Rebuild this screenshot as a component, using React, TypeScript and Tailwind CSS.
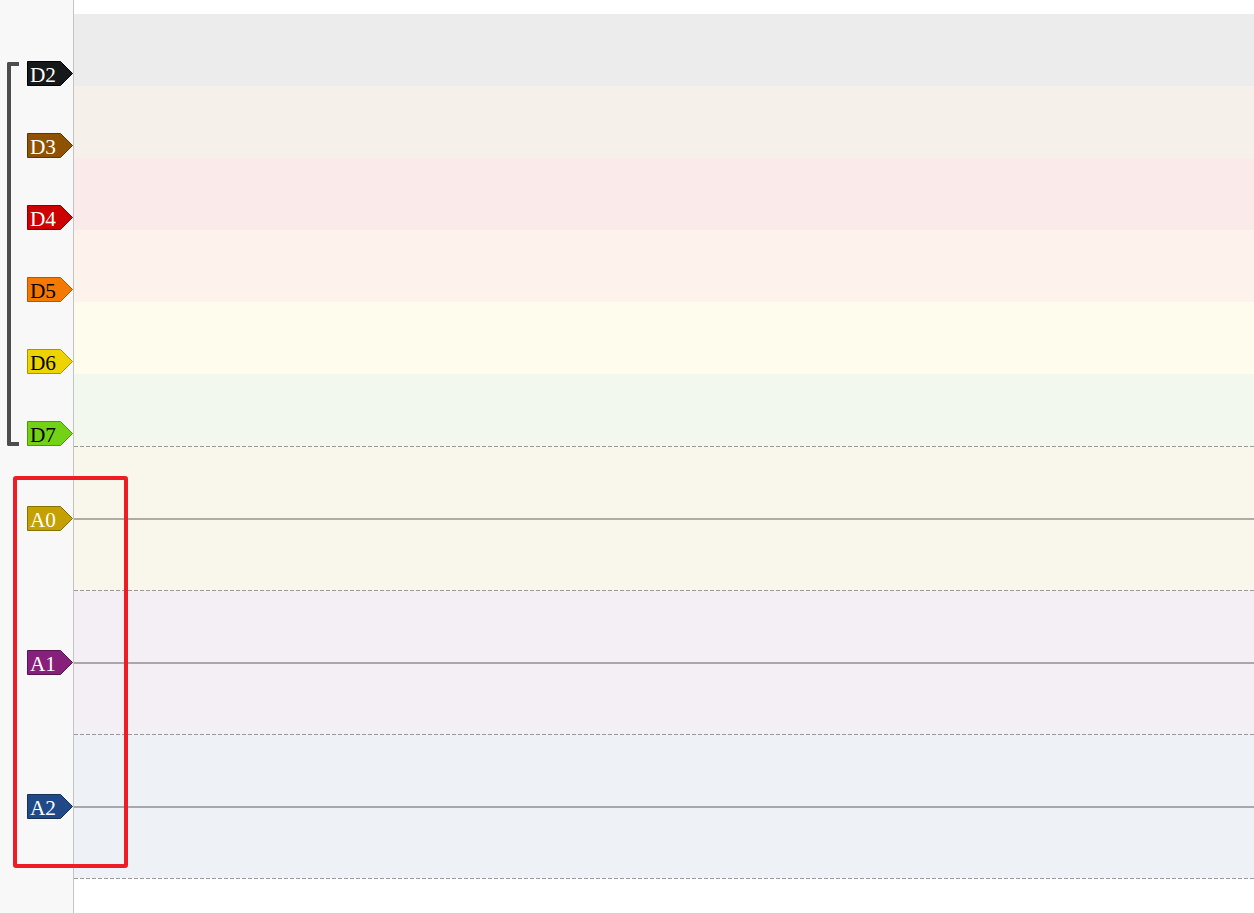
type Channel = {
  name: string;
  fill: string;
  stroke: string;
  text: string;
  row: string;
};

const digital: Channel[] = [
  { name: "D2", fill: "#16191a", stroke: "#000000", text: "#ffffff", row: "bg-[#ececec]" },
  { name: "D3", fill: "#8f5202", stroke: "#5e3600", text: "#ffffff", row: "bg-[#f5f0ea]" },
  { name: "D4", fill: "#cc0000", stroke: "#8a0000", text: "#ffffff", row: "bg-[#fbeaea]" },
  { name: "D5", fill: "#f57900", stroke: "#b35800", text: "#000000", row: "bg-[#fdf3ec]" },
  { name: "D6", fill: "#edd400", stroke: "#a89600", text: "#000000", row: "bg-[#fefcec]" },
  { name: "D7", fill: "#73d216", stroke: "#4e9a06", text: "#000000", row: "bg-[#f2f8ee]" },
];

const analog: Channel[] = [
  { name: "A0", fill: "#c4a000", stroke: "#8a7000", text: "#ffffff", row: "bg-[#f9f7ec]" },
  { name: "A1", fill: "#87207a", stroke: "#5c1553", text: "#ffffff", row: "bg-[#f4eef5]" },
  { name: "A2", fill: "#204a87", stroke: "#15325c", text: "#ffffff", row: "bg-[#eef1f6]" },
];

// little pentagon flag with the channel name in it
const Tag = ({ ch }: { ch: Channel }) => (
  <svg width="46" height="25" viewBox="0 0 46 25" className="block">
    <polygon
      points="0.5,0.5 33.5,0.5 45.5,12.5 33.5,24.5 0.5,24.5"
      fill={ch.fill}
      stroke={ch.stroke}
      strokeWidth="1"
    />
    <text
      x="3"
      y="21"
      fill={ch.text}
      fontSize="22"
      textLength="26"
      lengthAdjust="spacingAndGlyphs"
      fontFamily="'Liberation Serif', 'DejaVu Serif', serif"
    >
      {ch.name}
    </text>
  </svg>
);

const Dash = ({ bg }: { bg: string }) => (
  <div
    className={`h-px w-full ${bg} bg-[image:repeating-linear-gradient(to_right,#9a9a9a_0_4px,transparent_4px_6px)]`}
  />
);

export default function App() {
  return (
    <div className="relative flex h-[913px] w-[1254px] overflow-hidden bg-white">
      {/* channel names column */}
      <aside className="w-[74px] shrink-0 border-r border-[#c4c4c4] bg-[#f8f8f8] pt-[14px]">
        <div className="flex">
          <div className="ml-[7px] mt-[48px] h-[384px] w-[12px] rounded-l-[2px] border-y-4 border-l-4 border-[#4d4d4d]" />
          <div className="ml-[8px] flex flex-col">
            {digital.map((d) => (
              <div key={d.name} className="flex h-[72px] items-end">
                <Tag ch={d} />
              </div>
            ))}
          </div>
        </div>
        {analog.map((a) => (
          <div key={a.name} className="flex h-[144px] items-center pl-[27px]">
            <Tag ch={a} />
          </div>
        ))}
      </aside>

      {/* traces */}
      <main className="flex flex-1 flex-col pt-[14px]">
        {digital.map((d) => (
          <div key={d.name} className={`h-[72px] ${d.row}`} />
        ))}
        {analog.map((a) => (
          <div key={a.name} className={a.row}>
            <Dash bg={a.row} />
            <div className="flex h-[143px] items-center">
              <div className="h-[2px] w-full bg-black/30" />
            </div>
          </div>
        ))}
        <Dash bg="bg-white" />
      </main>

      {/* annotation box */}
      <div className="absolute left-[13px] top-[476px] h-[392px] w-[115px] rounded-[3px] border-4 border-[#ee1c25]" />
    </div>
  );
}
